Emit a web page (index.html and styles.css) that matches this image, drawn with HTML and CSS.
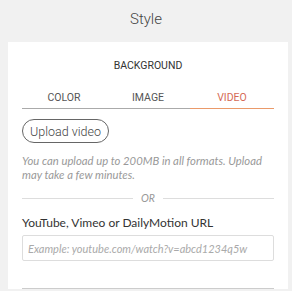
FILE: index.html
```html
<!DOCTYPE html>
<html lang="en">
<head>
    <meta charset="UTF-8">
    <meta name="viewport" content="width=device-width, initial-scale=1.0">
    <title>Style</title>
    <link rel="stylesheet" href="styles.css">
</head>
<body>
    <header class="title">Style</header>

    <div class="card">
        <div class="section-title">BACKGROUND</div>

        <div class="tabs">
            <div class="tab">COLOR</div>
            <div class="tab">IMAGE</div>
            <div class="tab active">VIDEO</div>
        </div>

        <button class="upload-button">Upload video</button>
        <p class="help">You can upload up to 200MB in all formats. Upload may take a few minutes.</p>

        <div class="divider"><span>OR</span></div>

        <label class="field-label" for="url">YouTube, Vimeo or DailyMotion URL</label>
        <input id="url" class="url-input" type="text" placeholder="Example: youtube.com/watch?v=abcd1234q5w">

        <div class="bottom-line"></div>
    </div>
</body>
</html>
```

FILE: styles.css
```css
html, body {
    margin: 0;
    padding: 0;
    background: #f1f1f1;
    font-family: Roboto, "Liberation Sans", sans-serif;
    color: #333;
}
.title {
    height: 42px;
    line-height: 38px;
    text-align: center;
    font-size: 15px;
    font-weight: 300;
    color: #444;
}
.card {
    margin: 0 4px 0 8px;
    height: 247px;
    padding: 0 14px;
    background: #fff;
    box-sizing: border-box;
    padding-top: 17px;
    overflow: hidden;
}
.section-title {
    text-align: center;
    font-size: 10.5px;
    line-height: 14px;
    color: #333;
}
.tabs {
    display: flex;
    margin-top: 14px;
    border-bottom: 1px solid #aaa;
}
.tab {
    flex: 1;
    text-align: center;
    font-size: 10.5px;
    line-height: 21px;
    color: #555;
}
.tab.active {
    color: #d56a55;
    margin-bottom: -1px;
    border-bottom: 1px solid #ea9a6a;
}
.upload-button {
    display: block;
    margin-top: 10px;
    width: 87px;
    height: 24px;
    padding: 0;
    border: 1px solid #666;
    border-radius: 12px;
    background: #fff;
    font-family: Roboto, "Liberation Sans", sans-serif;
    font-size: 12.5px;
    font-weight: 300;
    color: #444;
}
.help {
    margin: 11px 0 0;
    font-family: Lato, "Open Sans", sans-serif;
    font-style: italic;
    font-size: 11.3px;
    line-height: 14px;
    color: #999;
}
.divider {
    display: flex;
    align-items: center;
    margin-top: 9px;
    height: 14px;
    font-family: Lato, sans-serif;
    font-style: italic;
    font-size: 10.5px;
    color: #999;
}
.divider::before, .divider::after {
    content: "";
    flex: 1;
    border-top: 1px solid #ddd;
}
.divider span {
    padding: 0 8px;
}
.field-label {
    display: block;
    margin-top: 10px;
    font-family: Lato, sans-serif;
    font-size: 12px;
    line-height: 16px;
    color: #333;
}
.url-input {
    display: block;
    box-sizing: border-box;
    width: 100%;
    height: 26px;
    margin-top: 4px;
    padding: 0 5px;
    border: 1px solid #ddd;
    border-radius: 2px;
    font-family: Lato, sans-serif;
    font-size: 11px;
    font-style: italic;
    color: #333;
}
.url-input::placeholder {
    color: #aaa;
}
.bottom-line {
    margin-top: 27px;
    border-top: 1px solid #ccc;
}
```
